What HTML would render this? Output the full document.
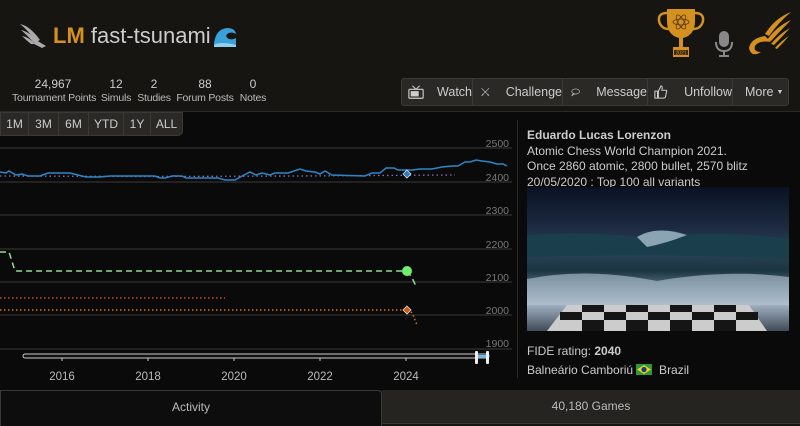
<!DOCTYPE html>
<html><head><meta charset="utf-8"><style>
*{box-sizing:border-box;margin:0;padding:0}
body{width:800px;height:426px;overflow:hidden;background:#161512;font-family:"Liberation Sans",sans-serif;color:#bababa;position:relative}
.abs{position:absolute}
.stat{position:absolute;top:77px;text-align:center;font-size:10.5px;letter-spacing:-0.2px;color:#bbb;line-height:14px;white-space:nowrap}
.stat b{font-weight:normal;color:#ccc;display:block;font-size:12px;letter-spacing:0}
.btns{position:absolute;left:401px;top:78px;width:388px;height:28px;background:#2a2926;border:1px solid #3a3936;border-radius:3px;display:flex;font-size:12.5px;color:#ccc;white-space:nowrap}
.btns div{border-right:1px solid #3a3936;display:flex;align-items:center;height:100%}
.rng{position:absolute;top:112px;left:0;height:24px;display:flex;background:#2a2926;border:1px solid #3a3936;border-radius:0 0 5px 0;font-size:12px;color:#ccc}
.rng div{border-right:1px solid #3a3936;display:flex;align-items:center;justify-content:center;height:100%}
.side{position:absolute;left:527px;font-size:12px;color:#ccc;line-height:15.5px;white-space:nowrap}
</style></head><body>
<svg class="abs" style="left:18px;top:22px" width="30" height="28" viewBox="0 0 30 28"><g fill="#aaa"><path d="M2 2 Q12 4 22 18 L18 20 Q10 8 2 2Z"/><path d="M3 8 Q12 10 20 20 L16 21 Q9 13 3 8Z"/><path d="M4 14 Q11 15 17 22 L13 22 Q8 18 4 14Z"/><path d="M18 18 L28 24 L24 26 L16 22Z"/></g></svg>
<div class="abs" style="left:53px;top:22px;font-size:22px;line-height:28px;color:#ccc"><b style="color:#d59120">LM</b> fast-tsunami</div>
<svg class="abs" style="left:213px;top:25px" width="24" height="22" viewBox="0 0 24 22"><path d="M1 18 Q3 4 14 3 Q22 3 23 9 Q18 6 14 9 Q12 12 16 14 Q20 15 23 13 L23 20 L1 20Z" fill="#3aa0d8"/><path d="M1 20 Q8 16 23 20 L23 22 L1 22Z" fill="#8fd0f0"/></svg>
<svg class="abs" style="left:655px;top:7px" width="52" height="52" viewBox="0 0 52 52"><g fill="#d59120"><path d="M12 2 H40 V14 Q40 28 28 31 V40 H34 V50 H18 V40 H24 V31 Q12 28 12 14Z"/><path d="M12 6 Q3 6 4 14 Q6 22 14 22" fill="none" stroke="#d59120" stroke-width="2.5"/><path d="M40 6 Q49 6 48 14 Q46 22 38 22" fill="none" stroke="#d59120" stroke-width="2.5"/></g><g fill="none" stroke="#5a3a08" stroke-width="0.8"><ellipse cx="26" cy="15" rx="8" ry="3"/><ellipse cx="26" cy="15" rx="8" ry="3" transform="rotate(60 26 15)"/><ellipse cx="26" cy="15" rx="8" ry="3" transform="rotate(-60 26 15)"/></g><rect x="19" y="43" width="14" height="5" fill="#3a2a08"/><text x="26" y="47.5" font-size="5" fill="#d59120" text-anchor="middle" font-family="Liberation Sans">2021</text></svg>
<svg class="abs" style="left:714px;top:30px" width="20" height="28" viewBox="0 0 20 28"><rect x="5" y="1" width="10" height="16" rx="5" fill="#888"/><path d="M2 12 Q2 21 10 21 Q18 21 18 12" fill="none" stroke="#888" stroke-width="2"/><rect x="9" y="21" width="2" height="4" fill="#888"/><rect x="5" y="25" width="10" height="2" fill="#888"/></svg>
<svg class="abs" style="left:745px;top:10px" width="48" height="50" viewBox="0 0 48 50"><g fill="#d59120"><path d="M46 2 Q30 8 20 24 L24 26 Q34 12 46 2Z"/><path d="M46 10 Q32 16 22 30 L26 31 Q36 20 46 10Z"/><path d="M45 18 Q34 24 26 34 L29 35 Q37 27 45 18Z"/><path d="M44 26 Q36 31 30 38 L32 39 Q38 33 44 26Z"/><path d="M20 26 Q6 28 4 38 Q6 48 16 42 Q8 42 10 36 Q14 30 26 32Z"/></g></svg>
<div class="stat" style="left:12px;width:82px"><b>24,967</b>Tournament Points</div>
<div class="stat" style="left:100px;width:32px"><b>12</b>Simuls</div>
<div class="stat" style="left:137px;width:34px"><b>2</b>Studies</div>
<div class="stat" style="left:176px;width:58px"><b>88</b>Forum Posts</div>
<div class="stat" style="left:239px;width:28px"><b>0</b>Notes</div>
<div class="btns">
<div style="width:71px;padding-left:6px"><svg width="18" height="16" viewBox="0 0 18 16"><rect x="1" y="5" width="16" height="10" rx="1" fill="none" stroke="#ccc" stroke-width="1.3"/><rect x="3" y="7" width="9" height="6" fill="#ccc"/><path d="M5 1 L9 5 L13 1" fill="none" stroke="#ccc" stroke-width="1.2"/></svg><span style="margin-left:13px">Watch</span></div>
<div style="width:90px;padding-left:8px"><svg width="16" height="16" viewBox="0 0 16 16"><path d="M1 1 L15 15 M15 1 L1 15 M2 12 L4 14 M12 14 L14 12" stroke="#ccc" stroke-width="1.2"/></svg><span style="margin-left:16px">Challenge</span></div>
<div style="width:85px;padding-left:8px"><svg width="18" height="16" viewBox="0 0 18 16"><ellipse cx="9" cy="7" rx="7.5" ry="5" fill="none" stroke="#ccc" stroke-width="1.2"/><path d="M4 11 L2 15 L7 12" fill="none" stroke="#ccc" stroke-width="1.2"/></svg><span style="margin-left:16px">Message</span></div>
<div style="width:85px;padding-left:6px"><svg width="16" height="16" viewBox="0 0 16 16"><path d="M1 7 H4 V15 H1Z M5 7 L8 1 Q10 1 9 6 H14 Q15 7 14 9 L13 14 Q12 15 10 15 H5Z" fill="none" stroke="#ccc" stroke-width="1.2"/></svg><span style="margin-left:16px">Unfollow</span></div>
<div style="width:55px;padding-left:12px;border:none">More <span style="font-size:7px;margin-left:3px">▼</span></div>
</div>
<div class="abs" style="left:0;top:111px;width:800px;height:279px;background:#0a0a0a;border-top:1px solid #2a2926"></div>
<div class="abs" style="left:517px;top:120px;width:1px;height:258px;background:#2a2926"></div>
<div class="rng"><div style="width:28px">1M</div><div style="width:30px">3M</div><div style="width:30px">6M</div><div style="width:35px">YTD</div><div style="width:27px">1Y</div><div style="width:31px;border:none">ALL</div></div>
<svg class="abs" style="left:0;top:130px" width="515" height="260" viewBox="0 130 515 260">
<g stroke="#3a3a3a" stroke-width="1"><line x1="0" y1="148" x2="512" y2="148"/><line x1="0" y1="182" x2="512" y2="182"/><line x1="0" y1="215" x2="512" y2="215"/><line x1="0" y1="249" x2="512" y2="249"/><line x1="0" y1="282" x2="512" y2="282"/><line x1="0" y1="315" x2="512" y2="315"/><line x1="0" y1="349" x2="512" y2="349"/></g>
<g font-family="Liberation Sans" font-size="10.5" fill="#777" text-anchor="end"><text x="509" y="147">2500</text><text x="509" y="181">2400</text><text x="509" y="214">2300</text><text x="509" y="248">2200</text><text x="509" y="281">2100</text><text x="509" y="314">2000</text><text x="509" y="347">1900</text></g>
<path d="M0 176 L150 176.5 L300 176 L455 175" stroke="#8a6cc0" stroke-width="1.3" stroke-dasharray="1.5 3" fill="none"/>
<path d="M0 172 L6 173 L9 171 L16 175 L22 174 L28 176 L40 176 L48 173 L70 173 L78 175 L86 177 L100 177 L110 176 L155 176 L160 178 L165 178 L172 176 L182 176 L186 178 L218 178 L225 180 L235 180 L242 176 L250 172 L256 175 L262 173 L270 175 L275 173 L288 173 L300 169 L306 171 L315 172 L320 174 L325 171 L332 175 L365 176 L372 173 L380 173 L386 168 L394 168 L398 170 L412 170 L420 169 L432 169 L442 167 L452 166 L458 166 L465 162 L470 162 L476 160 L482 161 L490 162 L497 164 L503 164 L507 166" stroke="#2a88c8" stroke-width="1.5" fill="none"/>
<path d="M407 170 L411 174 L407 178 L403 174Z" fill="#2a7ac0" stroke="#ddd" stroke-width="0.8"/>
<path d="M0 252 H9 L15 271 H402 Q410 272 413 280 L417 288" stroke="#90e090" stroke-width="1.5" stroke-dasharray="6 4" fill="none"/>
<circle cx="407" cy="271" r="5" fill="#6ef06e"/>
<path d="M0 298 H225" stroke="#e04040" stroke-width="1.5" stroke-dasharray="1.5 2.5" fill="none"/>
<path d="M0 310 H410 L413 315 L417 325" stroke="#e06a10" stroke-width="1.5" stroke-dasharray="1.5 2.5" fill="none"/>
<path d="M407 306 L411 310 L407 314 L403 310Z" fill="#d05a10" stroke="#ddd" stroke-width="0.8"/>
<rect x="23" y="354" width="466" height="4" rx="2" fill="#111" stroke="#ccc" stroke-width="1"/>
<rect x="476" y="355" width="12" height="3" fill="#6ab8f0"/>
<rect x="475" y="351" width="3" height="13" rx="1" fill="#eee"/><rect x="486" y="351" width="3" height="13" rx="1" fill="#eee"/>
<g stroke="#ccc"><line x1="62" y1="358" x2="62" y2="361"/><line x1="148" y1="358" x2="148" y2="361"/><line x1="234" y1="358" x2="234" y2="361"/><line x1="320" y1="358" x2="320" y2="361"/><line x1="406" y1="358" x2="406" y2="361"/></g>
<g font-family="Liberation Sans" font-size="11.5" fill="#bbb" text-anchor="middle"><text x="62" y="380">2016</text><text x="148" y="380">2018</text><text x="234" y="380">2020</text><text x="320" y="380">2022</text><text x="406" y="380">2024</text></g>
</svg>
<div class="side" style="top:128px"><b>Eduardo Lucas Lorenzon</b><br>Atomic Chess World Champion 2021.<br>Once 2860 atomic, 2800 bullet, 2570 blitz<br>20/05/2020 : Top 100 all variants</div>
<svg class="abs" style="left:527px;top:187px" width="262" height="144" viewBox="0 0 262 144">
<defs><linearGradient id="sky" x1="0" y1="0" x2="0" y2="1"><stop offset="0" stop-color="#0a1222"/><stop offset="0.3" stop-color="#1e2c44"/><stop offset="0.45" stop-color="#2a4458"/><stop offset="0.58" stop-color="#1a3440"/><stop offset="0.7" stop-color="#5a7488"/><stop offset="0.82" stop-color="#a0b0c0"/><stop offset="1" stop-color="#404a58"/></linearGradient></defs>
<rect width="262" height="144" fill="url(#sky)"/>
<path d="M0 48 Q60 44 110 50 Q130 40 150 48 Q200 44 262 52 L262 72 Q130 66 0 70Z" fill="#1a3e4c"/>
<path d="M110 50 Q130 38 160 48 Q140 56 120 60Z" fill="#8aa4b4"/>
<path d="M0 92 Q60 80 130 94 Q200 82 262 90 L262 118 L0 118Z" fill="#b8c6d4" opacity="0.6"/>
<g fill="#ccc"><path d="M40 118 L222 118 L240 144 L20 144Z"/></g>
<g fill="#151515"><rect x="55" y="118" width="22" height="7"/><rect x="99" y="118" width="22" height="7"/><rect x="143" y="118" width="22" height="7"/><rect x="187" y="118" width="22" height="7"/><rect x="33" y="125" width="22" height="8"/><rect x="77" y="125" width="22" height="8"/><rect x="121" y="125" width="22" height="8"/><rect x="165" y="125" width="22" height="8"/><rect x="209" y="125" width="22" height="8"/><rect x="55" y="133" width="22" height="11"/><rect x="99" y="133" width="22" height="11"/><rect x="143" y="133" width="22" height="11"/><rect x="187" y="133" width="22" height="11"/></g>
</svg>
<div class="side" style="top:344px">FIDE rating: <b>2040</b></div>
<div class="side" style="top:363px">Balneário Camboriú <svg width="16" height="11" viewBox="0 0 16 11" style="vertical-align:-1px"><rect width="16" height="11" fill="#2a9a3a"/><path d="M8 1 L15 5.5 L8 10 L1 5.5Z" fill="#f0d020"/><circle cx="8" cy="5.5" r="2.6" fill="#1a3a8a"/></svg> &nbsp;Brazil</div>
<div class="abs" style="left:0;top:390px;width:382px;height:36px;background:#0d0d0d;border:1px solid #3a3936;border-bottom:none;border-radius:0 4px 0 0;text-align:center;line-height:32px;font-size:12px;color:#bbb">Activity</div>
<div class="abs" style="left:382px;top:390px;width:418px;height:34px;background:#262421;text-align:center;line-height:32px;font-size:12px;color:#bbb;border-bottom:1px solid #3a3936">40,180 Games</div>
</body></html>
